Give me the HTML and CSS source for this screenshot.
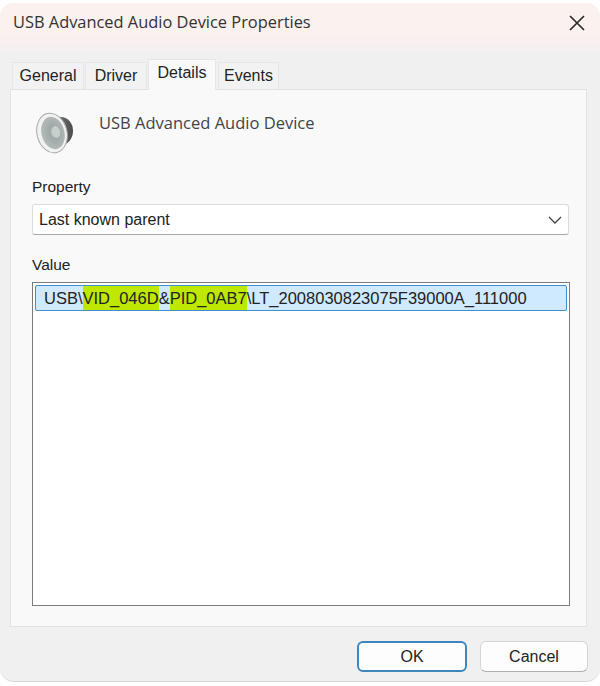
FILE: index.html
```html
<!DOCTYPE html>
<html lang="en">
<head>
    <meta charset="UTF-8">
    <title>USB Advanced Audio Device Properties</title>
    <link rel="stylesheet" href="styles.css">
</head>
<body>
    <div class="window">
        <header class="titlebar">
            <span class="title">USB Advanced Audio Device Properties</span>
            <svg class="close" width="18" height="18" viewBox="0 0 18 18">
                <path d="M2 2 L16 16 M16 2 L2 16" stroke="#2b2b2b" stroke-width="1.7" fill="none"/>
            </svg>
        </header>

        <nav class="tabs">
            <a class="tab tab-general">General</a>
            <a class="tab tab-driver">Driver</a>
            <a class="tab tab-details active">Details</a>
            <a class="tab tab-events">Events</a>
        </nav>

        <main class="panel">
            <div class="device">
                <svg class="device-icon" width="40" height="46" viewBox="0 0 40 46">
                    <defs>
                        <linearGradient id="back" x1="0" y1="0" x2="1" y2="0">
                            <stop offset="0" stop-color="#8a8a8a"/>
                            <stop offset="1" stop-color="#4c4c4c"/>
                        </linearGradient>
                        <radialGradient id="cone" cx="0.55" cy="0.5" r="0.6">
                            <stop offset="0" stop-color="#d4dcd8"/>
                            <stop offset="0.3" stop-color="#9ea8a6"/>
                            <stop offset="1" stop-color="#b9bfbd"/>
                        </radialGradient>
                    </defs>
                    <ellipse cx="26" cy="21" rx="12" ry="14" fill="url(#back)"/>
                    <ellipse cx="17" cy="23" rx="15" ry="20" transform="rotate(-14 17 23)" fill="#f2f2f2" stroke="#a8a8a8"/>
                    <ellipse cx="18" cy="23" rx="11.5" ry="16.5" transform="rotate(-14 18 23)" fill="url(#cone)"/>
                    <ellipse cx="21" cy="22" rx="4" ry="6" transform="rotate(-14 21 22)" fill="#c6d0cc"/>
                </svg>
                <span class="device-name">USB Advanced Audio Device</span>
            </div>

            <label class="field-label label-property">Property</label>
            <div class="select">
                <span>Last known parent</span>
                <svg width="14" height="8" viewBox="0 0 14 8">
                    <path d="M1 1 L7 7 L13 1" stroke="#444" stroke-width="1.3" fill="none"/>
                </svg>
            </div>

            <label class="field-label label-value">Value</label>
            <div class="listbox">
                <div class="list-row">USB\<span class="mark">VID_046D</span>&amp;<span class="mark">PID_0AB7</span>\LT_2008030823075F39000A_111000</div>
            </div>
        </main>

        <footer class="buttons">
            <button class="btn btn-default">OK</button>
            <button class="btn">Cancel</button>
        </footer>
    </div>
</body>
</html>
```

FILE: styles.css
```css
* {
    box-sizing: border-box;
}
body {
    margin: 0;
    padding-top: 3px;
    height: 686px;
    overflow: hidden;
    background-color: #fff;
    font-family: 'Liberation Sans', Arial, sans-serif;
    color: #222;
}
.window {
    height: 679px;
    border-radius: 14px;
    background-color: #f0f0f0;
    background-image: linear-gradient(to bottom, #fbf1ee 0, #fbf1ee 30px, #f0f0f0 52px);
    border-bottom: 1px solid #d8d8d8;
    display: flex;
    flex-direction: column;
}
.titlebar {
    height: 40px;
    padding: 0 14px 0 13px;
    display: flex;
    align-items: center;
    justify-content: space-between;
}
.title {
    font-family: 'Open Sans', sans-serif;
    font-size: 16.4px;
    line-height: 20px;
    margin-top: -2px;
    color: #333;
}
.tabs {
    height: 46px;
    padding: 16px 0 0 12px;
    display: flex;
    align-items: flex-end;
}
.tab {
    height: 27px;
    margin-right: 1px;
    background-color: #f2f2f2;
    border: 1px solid #e6e6e6;
    border-bottom: none;
    font-size: 16px;
    display: flex;
    align-items: center;
    justify-content: center;
}
.tab-general { width: 72px; }
.tab-driver { width: 62px; }
.tab-details { width: 68px; }
.tab-events { width: 61px; margin-left: 1px; }
.tab.active {
    height: 31px;
    margin-bottom: -1px;
    padding-bottom: 4px;
    background-color: #f9f9f9;
    position: relative;
}
.panel {
    height: 538px;
    margin: 0 13px 0 10px;
    padding: 20px 17px 0 21px;
    background-color: #f9f9f9;
    border: 1px solid #e2e2e2;
}
.device {
    height: 46px;
    display: flex;
    align-items: flex-start;
    gap: 24px;
}
.device-icon {
    flex: none;
    margin-left: 3px;
}
.device-name {
    font-family: 'Open Sans', sans-serif;
    font-size: 16.5px;
    color: #444;
    margin-top: 1px;
}
.field-label {
    display: block;
    font-size: 15.5px;
    line-height: 20px;
}
.label-property {
    margin-top: 21px;
}
.label-value {
    margin-top: 20px;
}
.select {
    height: 31px;
    margin-top: 7px;
    padding: 0 6px;
    background-color: #fff;
    border: 1px solid #dcdcdc;
    border-bottom-color: #a8a8a8;
    border-radius: 3px;
    font-size: 16px;
    display: flex;
    align-items: center;
    justify-content: space-between;
}
.listbox {
    height: 324px;
    margin-top: 7px;
    padding: 2px 2px;
    background-color: #fff;
    border: 1px solid #7b7b7b;
    width: 538px;
}
.list-row {
    height: 26px;
    padding-left: 8px;
    background-color: #cfe9ff;
    border: 1px solid #3d8fd0;
    border-radius: 2px;
    font-size: 16.5px;
    line-height: 24px;
    white-space: nowrap;
}
.mark {
    background-color: #bfe800;
    display: inline-block;
    height: 24px;
}
.buttons {
    flex: 1;
    padding: 14px 12px 0 0;
    display: flex;
    justify-content: flex-end;
    gap: 13px;
}
.btn {
    width: 108px;
    height: 31px;
    background-color: #fdfdfd;
    border: 1px solid #d4d4d4;
    border-bottom-color: #b0b0b0;
    border-radius: 6px;
    font-family: 'Liberation Sans', Arial, sans-serif;
    font-size: 16px;
    color: #222;
}
.btn-default {
    width: 110px;
    border: 2px solid #3d87bd;
}
```
